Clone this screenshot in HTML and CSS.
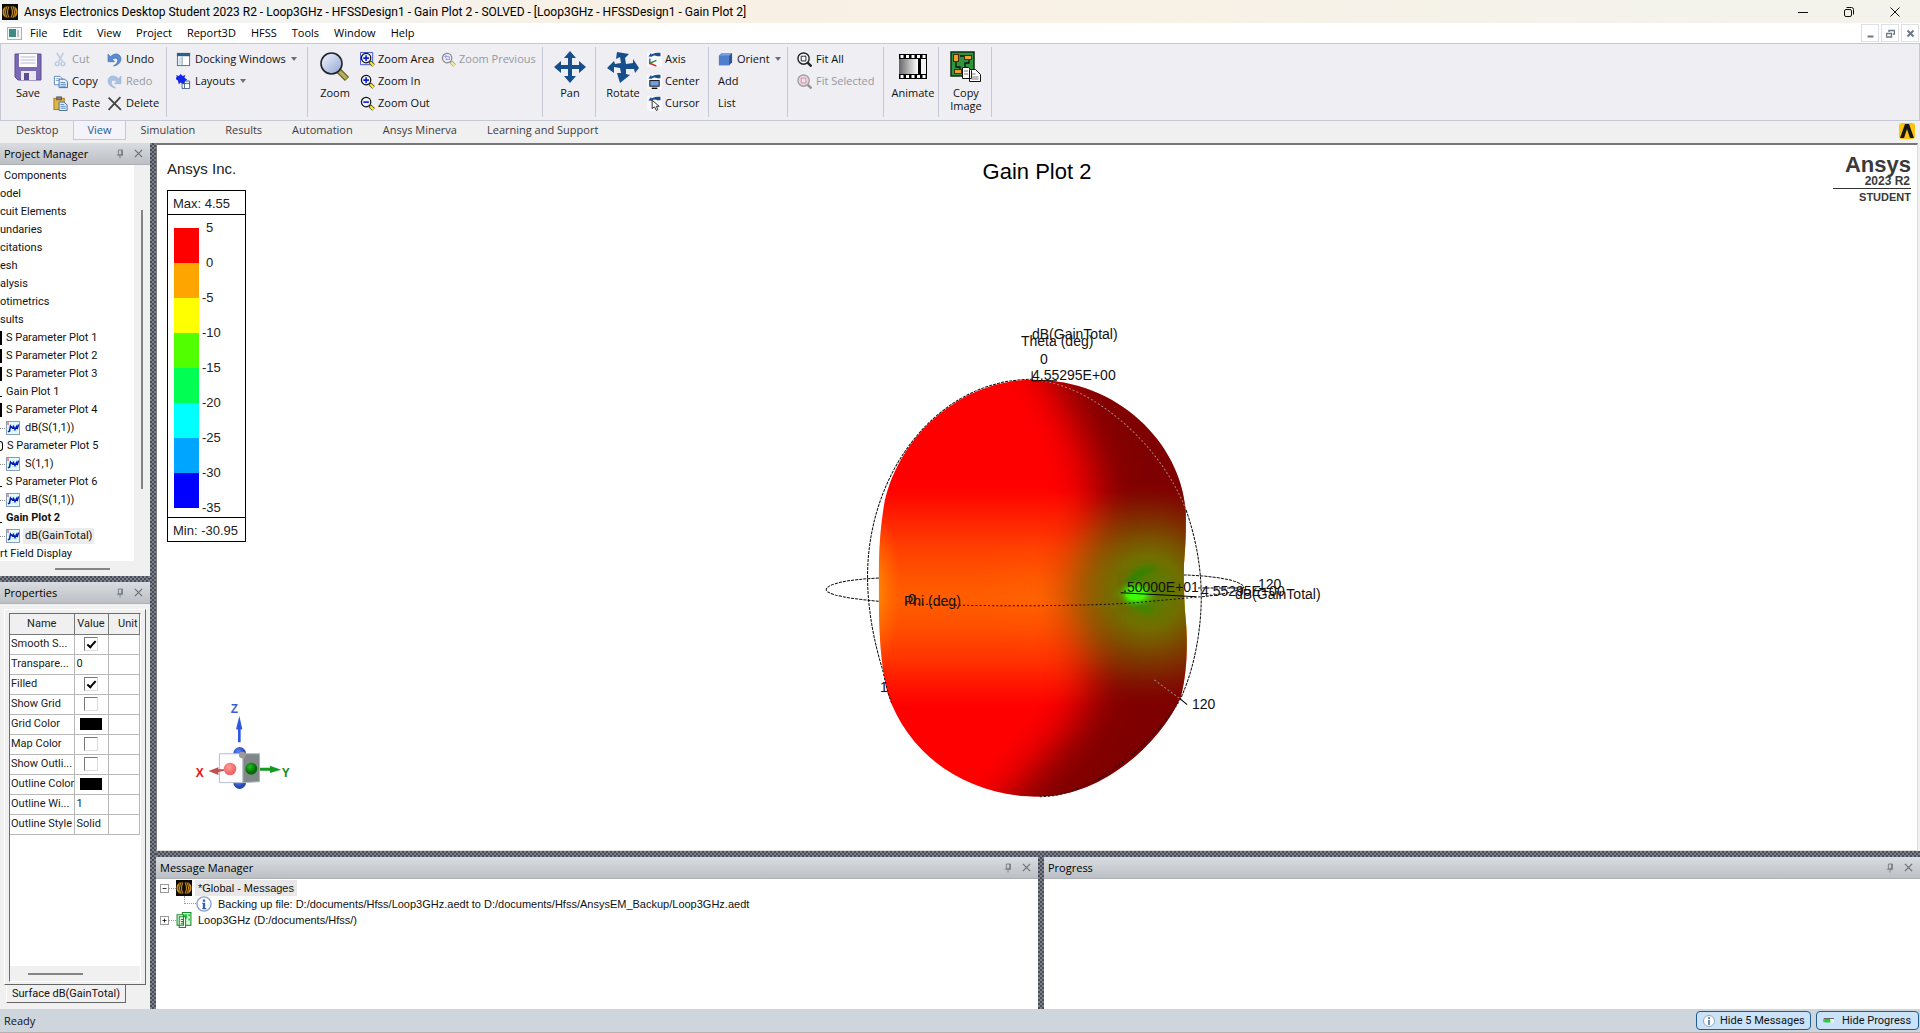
FILE: index.html
```html
<!DOCTYPE html>
<html lang="en">
<head>
<meta charset="utf-8">
<title>Ansys Electronics Desktop Student 2023 R2</title>
<link rel="stylesheet" href="styles.css">
</head>
<body>
<svg class="sprite" aria-hidden="true">
  <defs>
    <linearGradient id="glass" x1="0" y1="0" x2="1" y2="1"><stop offset="0" stop-color="#f4f8ff"/><stop offset="1" stop-color="#8fa3d0"/></linearGradient>
    <linearGradient id="film" x1="0" y1="0" x2="1" y2="0"><stop offset="0" stop-color="#666"/><stop offset="1" stop-color="#fff"/></linearGradient>
    <symbol id="i-ansys" viewBox="0 0 16 16"><rect width="16" height="16" fill="#0d0a06"/><g fill="none" stroke="#c98d1e" stroke-width="1.1"><path d="M7 2.500q-3 5.500 0 11M5.200 2.200q-3.400 5.800 0 11.600M3.400 2.800q-3.200 5.200 0 10.400M1.800 4.500q-1.400 3.500 0 7"/><path d="M9 2.500q3 5.500 0 11M10.800 2.200q3.400 5.800 0 11.600M12.600 2.800q3.200 5.200 0 10.400M14.200 4.500q1.400 3.500 0 7"/></g></symbol>
    <symbol id="i-pin" viewBox="0 0 10 12"><path d="M3 1h5v6H3zM1 7.500h8M5 8v3.500M7 1v6" fill="none" stroke="#6a6f78"/></symbol>
    <symbol id="i-x" viewBox="0 0 10 10"><path d="M1 1l8 8M9 1l-8 8" fill="none" stroke="#6a6f78" stroke-width="1.300"/></symbol>
    <symbol id="i-trace" viewBox="0 0 14 14"><rect x=".5" y=".5" width="13" height="13" fill="#e3fbfb" stroke="#8a9cb8"/><path d="M2 4h10M2 7h10M2 10h10" stroke="#9ce4e8" stroke-dasharray="1 1"/><path d="M2 11l1.500-1L4.500 5l2 2 1-1.500 1.500 3 1.500-3 1 1.500L12.500 3.500" fill="none" stroke="#0a14b8" stroke-width="1.500"/><path d="M2 1v3" stroke="#e04040"/></symbol>
    <symbol id="i-arc" viewBox="0 0 16 7"><path d="M1 5.500L4.500.8v2.400C7.500 1 11 1 16 .8v4.400h-4C9 3.600 6.500 4.500 5 6z" fill="#1a4f8c"/></symbol>
    <symbol id="i-undo" viewBox="0 0 14 14"><path d="M1 2v7h6L5 7c2-2 5-1.500 5 1 0 2-1.500 3.500-4 5 4-.5 7-3 7-6.500C13 1.500 7 0 3.300 4.500z" fill="#5b8cd0" stroke="#3a68ac" stroke-width=".6"/></symbol>
    <symbol id="i-handle" viewBox="0 0 16 16"><path d="M10.500 10.500l4 4" stroke="#333" stroke-width="3.800"/><path d="M11 11l3.500 3.500" stroke="#ffee20" stroke-width="2.400"/><circle cx="6.500" cy="6.500" r="5" fill="#eef2ff" stroke="#111" stroke-width="1.300"/></symbol>
    <symbol id="i-info" viewBox="0 0 14 14"><circle cx="7" cy="7" r="6.200" fill="#fff" stroke="#8aa0cc" stroke-width="1.200"/><path d="M6 3h2v2H6zM5.500 6H8v4.500h1v1H5.500v-1H6V7h-.5z" fill="#2f62b8"/></symbol>
  </defs>
</svg>

<header class="titlebar">
  <svg class="app-icon"><use href="#i-ansys"/></svg>
  <h1>Ansys Electronics Desktop Student 2023 R2 - Loop3GHz - HFSSDesign1 - Gain Plot 2 - SOLVED - [Loop3GHz - HFSSDesign1 - Gain Plot 2]</h1>
  <div class="window-buttons">
    <button aria-label="Minimize"><svg viewBox="0 0 10 10"><path d="M0 5.500h10"/></svg></button>
    <button aria-label="Restore"><svg viewBox="0 0 10 10"><rect x=".5" y="2.500" width="7" height="7" rx="1.500"/><path d="M2.500.5h5q2 0 2 2v5"/></svg></button>
    <button aria-label="Close"><svg viewBox="0 0 10 10"><path d="M.5.5l9 9M9.500.5l-9 9"/></svg></button>
  </div>
</header>

<nav class="menubar">
  <svg class="doc-icon" viewBox="0 0 15 13"><rect x=".5" y=".5" width="14" height="12" fill="#f4f6f8" stroke="#aab2ba"/><rect x="2" y="2" width="7" height="8" fill="#3d8b84"/><path d="M11 3v7" stroke="#b8c0c8" stroke-width="2"/></svg>
  <button>File</button><button>Edit</button><button>View</button><button>Project</button><button>Report3D</button><button>HFSS</button><button>Tools</button><button>Window</button><button>Help</button>
  <div class="mdi-buttons">
    <button aria-label="Minimize document"><svg viewBox="0 0 9 9"><path d="M1.500 7.500h6" stroke-width="2"/></svg></button>
    <button aria-label="Restore document"><svg viewBox="0 0 9 9"><path d="M3 3V1.500h5.500V5H7M.5 4.500h5v3.500h-5z" stroke-width="1.400"/></svg></button>
    <button aria-label="Close document"><svg viewBox="0 0 9 9"><path d="M1.500 1.500l6 6M7.500 1.500l-6 6" stroke-width="2"/></svg></button>
  </div>
</nav>

<section class="ribbon" aria-label="View ribbon">
  <div class="group g-edit">
    <button class="big"><svg viewBox="0 0 32 32"><path d="M3 3h26v26H6l-3-3z" fill="#7b69b4" stroke="#5d4c94"/><rect x="7" y="3" width="18" height="13" fill="#fdfdff"/><path d="M8.500 6h15M8.500 9h15M8.500 12h15" stroke="#b7b9cc"/><rect x="9" y="20" width="15" height="9" fill="#e9e8f2"/><rect x="12" y="22" width="5" height="7" fill="#5d4c94"/></svg>Save</button>
    <div class="stack c-cut">
      <button disabled><svg viewBox="0 0 16 16"><path d="M4 1l6 9M11 1L6 10" stroke="#8fa3c4" stroke-width="1.800"/><circle cx="4.500" cy="12.500" r="2" fill="none" stroke="#7f9cd0" stroke-width="1.500"/><circle cx="10.500" cy="12.500" r="2" fill="none" stroke="#7f9cd0" stroke-width="1.500"/></svg>Cut</button>
      <button><svg viewBox="0 0 16 16"><path d="M1.500 2.500h6l2 2v7h-8z" fill="#fff" stroke="#5a84b8"/><path d="M3 5h4M3 7h5" stroke="#7ba2d4"/><path d="M6.500 5.500h6l3 3v6h-9z" fill="#eaf2fc" stroke="#3c6ca8"/><path d="M8 9h5M8 11h6M8 13h6" stroke="#4f83c4"/></svg>Copy</button>
      <button><svg viewBox="0 0 16 16"><rect x="1" y="2.500" width="11" height="12" fill="#e3b53c" stroke="#a07820"/><rect x="4" y="1" width="5" height="3" fill="#888" stroke="#555"/><path d="M6.500 6.500h5l3.500 3v6H6.500z" fill="#eef4fd" stroke="#3f669c"/><path d="M8 9h4M8 11h5.500M8 13h5.500" stroke="#4f83c4"/></svg>Paste</button>
    </div>
    <div class="stack">
      <button><svg viewBox="0 0 14 14"><use href="#i-undo"/></svg>Undo</button>
      <button disabled><svg class="flip" viewBox="0 0 14 14"><use href="#i-undo"/></svg>Redo</button>
      <button><svg viewBox="0 0 14 14"><path d="M1.500 1.500L13 13M12.500 1L1.500 13" stroke="#444" stroke-width="1.700"/></svg>Delete</button>
    </div>
  </div>
  <div class="group g-dock">
    <div class="stack">
      <button><svg viewBox="0 0 16 16"><rect x="1.500" y="1.500" width="13" height="13" fill="#fff" stroke="#4a7090"/><rect x="1" y="1" width="14" height="3.500" fill="#2e5f86"/><rect x="2.500" y="6" width="3" height="7.500" fill="#d2e2ee"/><path d="M6.500 5v9" stroke="#6e90a8"/></svg>Docking Windows<i class="caret"></i></button>
      <button><svg viewBox="0 0 16 16"><path d="M6.500 7.500h8v8h-8z" fill="#fff" stroke="#3d6482"/><path d="M9 7v8M7 10h8" stroke="#3d6482"/><path d="M0 1l3 1 2-2 2 2 3-1-1 3 3 2-3 2-1 3-3-2-2 2-1-4-3-2 2-2z" fill="#1426e8"/></svg>Layouts<i class="caret"></i></button>
    </div>
  </div>
  <div class="group g-zoom">
    <button class="big"><svg viewBox="0 0 32 32"><path d="M20 20l8 8" stroke="#5c5a28" stroke-width="6"/><path d="M20 20l7.500 7.500" stroke="#b7ae5a" stroke-width="3.500"/><circle cx="12.500" cy="12.500" r="10.500" fill="url(#glass)" stroke="#23252c" stroke-width="1.600"/></svg>Zoom</button>
    <div class="stack c-area">
      <button><svg viewBox="0 0 16 16"><path d="M.5.5h13v13H.5z" fill="none" stroke="#4050d0"/><use href="#i-handle"/><path d="M6.500 3.500v6M3.500 6.500h6" stroke="#0a1cd0" stroke-width="1.700"/></svg>Zoom Area</button>
      <button><svg viewBox="0 0 16 16"><use href="#i-handle"/><path d="M6.500 3.500v6M3.500 6.500h6" stroke="#0a1cd0" stroke-width="1.700"/></svg>Zoom In</button>
      <button><svg viewBox="0 0 16 16"><use href="#i-handle"/><path d="M3.500 6.500h6" stroke="#0a1cd0" stroke-width="1.700"/></svg>Zoom Out</button>
    </div>
    <div class="stack">
      <button disabled><svg viewBox="0 0 16 16"><use href="#i-handle"/><path d="M4 5h5v3H5M6 3L4 5l2 2" fill="none" stroke="#1c2ce0"/></svg>Zoom Previous</button>
    </div>
  </div>
  <div class="group g-pan">
    <button class="big"><svg viewBox="0 0 32 32"><path d="M16 0l6 7h-4v7h7v-4l7 6-7 6v-4h-7v7h4l-6 7-6-7h4v-7H7v4l-7-6 7-6v4h7V7h-4z" fill="#164e8c"/></svg>Pan</button>
  </div>
  <div class="group g-rotate">
    <button class="big"><svg viewBox="0 0 32 32"><path d="M10 1l12 2-4 4 1 6 7-1V8l6 9-4 5-1-4-8 0 0 5 4 1-10 8-3-10h4l-1-5-6-1v6L0 17l7-7 1 3 6-1-1-6-4 2z" fill="#164e8c"/></svg>Rotate</button>
    <div class="stack">
      <button><svg viewBox="0 0 16 16"><rect width="16" height="16" fill="#f8f8fc"/><use href="#i-arc" width="15" height="6"/><path d="M3 7v6" stroke="#2a50e0" stroke-width="1.500"/><path d="M3 12l7-3" stroke="#1c9a30" stroke-width="1.500"/><path d="M3 12l7 3" stroke="#e02020" stroke-width="1.500"/></svg>Axis</button>
      <button><svg viewBox="0 0 16 16"><rect width="16" height="16" fill="#f8f8fc"/><use href="#i-arc" width="15" height="6"/><rect x="3" y="7" width="10" height="6" fill="#6f9fe0" stroke="#111"/><path d="M5 15.500h6" stroke="#111" stroke-width="2"/></svg>Center</button>
      <button><svg viewBox="0 0 16 16"><rect width="16" height="16" fill="#f8f8fc"/><use href="#i-arc" width="15" height="6"/><path d="M5.500 4.500v9l2.500-2 2 4 1.500-1-1.500-3.500h3z" fill="#fff" stroke="#222"/></svg>Cursor</button>
    </div>
  </div>
  <div class="group g-orient">
    <div class="stack">
      <button><svg viewBox="0 0 16 16"><path d="M1 4l3-3h11v10l-3 3H1z" fill="#2f5296"/><path d="M1 4h11v10H1z" fill="#4f7fcc"/><path d="M1 4l3-3h11l-3 3z" fill="#7aa0e0"/></svg>Orient<i class="caret"></i></button>
      <button>Add</button>
      <button>List</button>
    </div>
  </div>
  <div class="group g-fit">
    <div class="stack">
      <button><svg viewBox="0 0 16 16"><path d="M11 11l4.500 4.500" stroke="#222" stroke-width="2.500"/><circle cx="7" cy="7" r="6" fill="#f2f4ff" stroke="#222" stroke-width="1.500"/><path d="M4.500 4.500h5v5h-5z" fill="#fff" stroke="#222"/></svg>Fit All</button>
      <button disabled><svg viewBox="0 0 16 16"><path d="M11 11l4.500 4.500" stroke="#222" stroke-width="2.500"/><circle cx="7" cy="7" r="6" fill="#e8b8c4" stroke="#444" stroke-width="1.500"/><path d="M4.500 4.500h5v5h-5z" fill="#f8d8e0" stroke="#a02040"/></svg>Fit Selected</button>
    </div>
  </div>
  <div class="group g-animate">
    <button class="big"><svg viewBox="0 0 32 32"><rect x="2" y="3" width="28" height="25"/><path d="M3.500 5.500h25M3.500 25.500h25" stroke="#fff" stroke-width="3" stroke-dasharray="3 2.500"/><rect x="2" y="8" width="19" height="15" fill="url(#film)"/><rect x="24" y="8" width="5" height="15" fill="#f4f4f4"/></svg>Animate</button>
  </div>
  <div class="group g-copy">
    <button class="big"><svg viewBox="0 0 32 32"><rect x="1" y="1" width="23" height="24" fill="#2f9440" stroke="#0d2c12" stroke-width="1.500"/><path d="M6 10v6h4v4M19 8v4h-4v6M10 5h5" fill="none" stroke="#111" stroke-width="1.300"/><g fill="#f0a030" stroke="#4a2a08"><rect x="3.500" y="3.500" width="5" height="7"/><rect x="14.500" y="4.500" width="7" height="4"/><rect x="4.500" y="18.500" width="7" height="4"/></g><path d="M12.500 16.500h6l3 3v8h-9zM19.500 18.500h6l5 5v7h-11z" fill="#fff" stroke="#111"/><path d="M14 20h4M14 23h4M21.500 23h4M21.500 26h7M21.500 28h7" stroke="#777"/></svg>Copy<br>Image</button>
  </div>
</section>

<nav class="tabs">
  <a href="#">Desktop</a><a href="#" class="active">View</a><a href="#">Simulation</a><a href="#">Results</a><a href="#">Automation</a><a href="#">Ansys Minerva</a><a href="#">Learning and Support</a>
  <svg class="brand" viewBox="0 0 16 16"><rect width="16" height="16" rx="3" fill="#ffc20e"/><path d="M1 15L6 1h4l5 14h-4L8 6l-3 9z" fill="#161616"/></svg>
</nav>

<main class="workspace">
  <aside class="left-dock">
    <section class="panel project">
      <header class="caption"><h2>Project Manager</h2><button aria-label="Pin"><svg class="pin"><use href="#i-pin"/></svg></button><button aria-label="Close"><svg class="x"><use href="#i-x"/></svg></button></header>
      <div class="tree-frame">
        <ul class="tree">
          <li class="pad">Components</li><li>odel</li><li>cuit Elements</li><li>undaries</li><li>citations</li><li>esh</li><li>alysis</li><li>otimetrics</li><li>sults</li>
          <li class="plot bar">S Parameter Plot 1</li><li class="plot bar">S Parameter Plot 2</li><li class="plot bar">S Parameter Plot 3</li><li class="plot dash">Gain Plot 1</li><li class="plot bar">S Parameter Plot 4</li>
          <li class="leaf"><svg><use href="#i-trace"/></svg><span>dB(S(1,1))</span></li>
          <li class="plot ring">S Parameter Plot 5</li>
          <li class="leaf"><svg><use href="#i-trace"/></svg><span>S(1,1)</span></li>
          <li class="plot dash">S Parameter Plot 6</li>
          <li class="leaf"><svg><use href="#i-trace"/></svg><span>dB(S(1,1))</span></li>
          <li class="plot dash current">Gain Plot 2</li>
          <li class="leaf selected"><svg><use href="#i-trace"/></svg><span>dB(GainTotal)</span></li>
          <li>rt Field Display</li>
        </ul>
        <div class="vscroll"><i></i></div>
      </div>
      <div class="hscroll"><i></i></div>
    </section>
    <div class="splitter row"></div>
    <section class="panel properties">
      <header class="caption"><h2>Properties</h2><button aria-label="Pin"><svg class="pin"><use href="#i-pin"/></svg></button><button aria-label="Close"><svg class="x"><use href="#i-x"/></svg></button></header>
      <div class="sheet">
        <div class="grid-frame">
          <table>
            <colgroup><col class="c-name"><col class="c-value"><col></colgroup>
            <thead><tr><th>Name</th><th>Value</th><th class="unit">Unit</th></tr></thead>
            <tbody>
              <tr><td>Smooth S...</td><td class="mid"><input type="checkbox" aria-label="Smooth Shading" checked></td><td></td></tr>
              <tr><td>Transpare...</td><td>0</td><td></td></tr>
              <tr><td>Filled</td><td class="mid"><input type="checkbox" aria-label="Filled" checked></td><td></td></tr>
              <tr><td>Show Grid</td><td class="mid"><input type="checkbox" aria-label="Show Grid"></td><td></td></tr>
              <tr><td>Grid Color</td><td class="mid"><button class="swatch" aria-label="Grid Color"></button></td><td></td></tr>
              <tr><td>Map Color</td><td class="mid"><input type="checkbox" aria-label="Map Color"></td><td></td></tr>
              <tr><td>Show Outli...</td><td class="mid"><input type="checkbox" aria-label="Show Outline"></td><td></td></tr>
              <tr><td>Outline Color</td><td class="mid"><button class="swatch" aria-label="Outline Color"></button></td><td></td></tr>
              <tr><td>Outline Wi...</td><td>1</td><td></td></tr>
              <tr><td>Outline Style</td><td>Solid</td><td></td></tr>
            </tbody>
          </table>
          <div class="hscroll"><i></i></div>
        </div>
      </div>
      <button class="sheet-tab">Surface dB(GainTotal)</button>
    </section>
  </aside>
  <div class="splitter col"></div>

  <div class="center">
    <section class="view">
      <div class="view-left">
        <p class="company">Ansys Inc.</p>
        <div class="legend">
          <div class="limit">Max: 4.55</div>
          <div class="scale">
            <div class="ramp"><i class="k1"></i><i class="k2"></i><i class="k3"></i><i class="k4"></i><i class="k5"></i><i class="k6"></i><i class="k7"></i><i class="k8"></i></div>
            <ol><li class="pos">5</li><li class="pos">0</li><li>-5</li><li>-10</li><li>-15</li><li>-20</li><li>-25</li><li>-30</li><li>-35</li></ol>
          </div>
          <div class="limit">Min: -30.95</div>
        </div>
        <svg class="triad" viewBox="0 0 300 250">
          <defs>
            <radialGradient id="ballR" cx=".4" cy=".35"><stop offset="0" stop-color="#ff9d9d"/><stop offset="1" stop-color="#f06868"/></radialGradient>
            <radialGradient id="ballG" cx=".4" cy=".35"><stop offset="0" stop-color="#22c022"/><stop offset="1" stop-color="#066806"/></radialGradient>
            <radialGradient id="ballB" cx=".4" cy=".35"><stop offset="0" stop-color="#5b86ff"/><stop offset="1" stop-color="#2448b0"/></radialGradient>
          </defs>
          <g transform="translate(-90 -40)">
            <circle cx="239" cy="219" r="19" fill="url(#ballB)"/><circle cx="239" cy="307" r="19" fill="url(#ballB)"/>
            <path d="M178 220h71v87h-71z" fill="#fdfdff" stroke="#b4c0d2" stroke-width="3"/><path d="M249 220h50v84l-50 3z" fill="#808888" stroke="#aab4c0" stroke-width="3"/>
            <circle cx="247" cy="224" r="10" fill="#a09a9a"/>
            <path d="M234 185v-38l-6-1 10-40 9 40-5 1v38z" fill="#2f58e0"/>
            <path d="M300 262h30v-6l34 12-34 10v-7h-30z" fill="#149a20"/><circle cx="274" cy="265" r="18" fill="url(#ballG)"/>
            <path d="M193 267h-18v-6l-30 11 30 12v-9l18-4z" fill="#c05050"/><circle cx="210" cy="266" r="19" fill="url(#ballR)"/>
            <text x="212" y="98" fill="#3b5fd0">Z</text><text x="107" y="291" fill="#f01010">X</text><text x="366" y="289" fill="#0f8c1c">Y</text>
          </g>
        </svg>
      </div>
      <div class="view-mid">
        <h2>Gain Plot 2</h2>
        <svg class="plot3d" viewBox="-84 0 624 510">
          <defs>
            <linearGradient id="body" gradientUnits="userSpaceOnUse" x1="0" y1="500" x2="0" y2="1220">
              <stop offset="0" stop-color="#f00"/><stop offset=".06" stop-color="#ff0300"/><stop offset=".17" stop-color="#ff2000"/><stop offset=".3" stop-color="#ff4000"/><stop offset=".42" stop-color="#ff5400"/><stop offset=".51" stop-color="#ff5e00"/><stop offset=".62" stop-color="#ff5000"/><stop offset=".76" stop-color="#ff3400"/><stop offset=".87" stop-color="#ff1400"/><stop offset=".96" stop-color="#f00"/>
            </linearGradient>
            <radialGradient id="edge"><stop offset="0" stop-color="#ff9000" stop-opacity=".9"/><stop offset="1" stop-color="#ff7000" stop-opacity="0"/></radialGradient>
            <radialGradient id="null">
              <stop offset="0" stop-color="#a8ff00"/><stop offset=".18" stop-color="#c4f400"/><stop offset=".34" stop-color="#e4dc00"/><stop offset=".5" stop-color="#f0b800" stop-opacity=".85"/><stop offset=".7" stop-color="#f89000" stop-opacity=".5"/><stop offset=".86" stop-color="#ff7800" stop-opacity=".18"/><stop offset="1" stop-color="#ff5000" stop-opacity="0"/>
            </radialGradient>
            <radialGradient id="glow"><stop offset="0" stop-color="#3f1"/><stop offset=".4" stop-color="#44f800"/><stop offset="1" stop-color="#50a000" stop-opacity="0"/></radialGradient>
            <filter id="soft" filterUnits="userSpaceOnUse" x="0" y="0" width="1900" height="1800"><feGaussianBlur stdDeviation="60"/></filter>
            <filter id="soft2" x="-1" y="-1" width="3" height="3"><feGaussianBlur stdDeviation="9"/></filter>
            <clipPath id="hull"><path d="M650 209C440 209 255 380 217 590C202 690 203 760 203 850C203 1000 212 1080 228 1150C290 1340 460 1460 670 1460C850 1460 1020 1300 1080 1160C1098 1090 1100 1000 1094 930C1088 860 1088 800 1089 760C1094 700 1095 660 1094 600C1078 400 900 209 650 209Z"/></clipPath>
          </defs>
          <g class="wire" transform="scale(.34439 .33333)">
            <path d="M203 804C120 808 50 820 50 840C60 862 170 872 280 880"/>
            <path d="M1088 795C1160 796 1262 810 1262 833C1240 845 1190 856 1130 861"/>
            <path d="M650 208C380 205 170 480 170 800C170 900 190 1000 214 1080"/>
            <path d="M1095 600C1125 690 1140 780 1139 870C1137 990 1110 1100 1076 1172"/>
            <path d="M1130 834H1262"/>
          </g>
          <text x="71" y="382">1.</text>
          <g transform="scale(.34439 .33333)">
            <g clip-path="url(#hull)">
              <path d="M190 190h920v1290H190z" fill="url(#body)"/>
              <ellipse cx="195" cy="840" rx="70" ry="240" fill="url(#edge)"/>
              <ellipse cx="680" cy="850" rx="200" ry="180" fill="url(#edge)" opacity=".15"/>
              <ellipse cx="985" cy="845" rx="300" ry="320" fill="url(#null)"/>
              <path class="shade" d="M580 0C720 220 815 380 835 540C840 660 780 740 765 850C780 980 845 1060 810 1170S620 1400 500 1560V1750H1850V0Z" filter="url(#soft)"/>
              <path d="M912 835C930 780 975 765 1015 770C990 790 960 800 935 835Z" fill="#2f8400" filter="url(#soft2)"/>
              <path d="M915 860C930 890 960 905 1010 905C980 880 960 880 940 860Z" fill="#308800" filter="url(#soft2)"/>
              <ellipse cx="948" cy="852" rx="66" ry="42" fill="url(#glow)"/>
              <path d="M895 780h27q-24 70 4 130h-31z" fill="#726800" filter="url(#soft2)" opacity=".8"/>
            </g>
            <g class="wire dotted">
              <path d="M280 880C450 890 800 890 950 878L1130 861M214 1080C222 1120 230 1150 240 1180"/>
              <path d="M670 1460C800 1462 980 1330 1076 1172"/>
            </g>
            <path class="wire pale" d="M650 210C820 220 1020 400 1095 600M1003 1110L1076 1165"/>
            <path class="axis" d="M905 848L1125 860M648 184V212H720M1076 1165L1098 1184"/>
          </g>
          <g>
            <text x="223" y="29">dB(GainTotal)</text><text x="212" y="36">Theta (deg)</text><text x="231" y="54">0</text><text x="223" y="70">4.55295E+00</text>
            <text x="449" y="279">120</text><text x="392" y="286">4.55295E+00</text><text x="426" y="289">dB(GainTotal)</text><text x="314" y="282">.50000E+01</text>
            <text x="95" y="296">Phi (deg)</text><text x="99" y="294">0</text><text x="383" y="399">120</text>
          </g>
        </svg>
      </div>
      <div class="view-right">
        <div class="logo"><b>Ansys</b><span>2023 R2</span><strong>STUDENT</strong></div>
      </div>
    </section>
    <div class="splitter row"></div>
    <div class="bottom-dock">
      <section class="panel messages">
        <header class="caption"><h2>Message Manager</h2><button aria-label="Pin"><svg class="pin"><use href="#i-pin"/></svg></button><button aria-label="Close"><svg class="x"><use href="#i-x"/></svg></button></header>
        <ul class="log">
          <li><button class="fold" aria-label="Collapse"><svg viewBox="0 0 9 9"><path d="M2 4.500h5"/></svg></button><i class="link"></i><svg class="ic"><use href="#i-ansys"/></svg><span class="hit">*Global - Messages</span></li>
          <li class="child"><i class="elbow"></i><svg class="ic"><use href="#i-info"/></svg><span>Backing up file: D:/documents/Hfss/Loop3GHz.aedt to D:/documents/Hfss/AnsysEM_Backup/Loop3GHz.aedt</span></li>
          <li><button class="fold" aria-label="Expand"><svg viewBox="0 0 9 9"><path d="M2 4.500h5M4.500 2v5"/></svg></button><i class="link"></i><svg class="ic" viewBox="0 0 14 15"><rect x="5.500" y=".5" width="8" height="12" fill="#d9ffd9" stroke="#1c8a2c"/><path d="M7 3h3M7 5h3M11 3h2M11 7h2" stroke="#20d040" stroke-width="2"/><path d="M.5 2.500h6v10h-6zM2.500 4.500h6v10h-6z" fill="#f2fff2" stroke="#1c8a2c"/><path d="M4 7h3M4 9h3M4 11h3" stroke="#1c8a2c"/></svg><span>Loop3GHz (D:/documents/Hfss/)</span></li>
        </ul>
      </section>
      <div class="splitter col"></div>
      <section class="panel progress">
        <header class="caption"><h2>Progress</h2><button aria-label="Pin"><svg class="pin"><use href="#i-pin"/></svg></button><button aria-label="Close"><svg class="x"><use href="#i-x"/></svg></button></header>
      </section>
    </div>
  </div>
</main>

<footer class="status">
  <span>Ready</span>
  <button><svg class="ic" viewBox="0 0 14 14"><circle cx="7" cy="7" r="5.500" fill="#fff" stroke="#9aa4b4"/><path d="M7 3v2M7 6v5" stroke="#3c66b4" stroke-width="1.500"/></svg>Hide 5 Messages</button>
  <button class="wide"><svg class="ic" viewBox="0 0 14 14"><path d="M2 8V4.500h10" fill="none" stroke="#666"/><path d="M2.500 5h6v3.500h-6z" fill="#1fd02f"/><path d="M8.500 5H12v3.500H8.500z" fill="#f2f2f2"/></svg>Hide Progress</button>
</footer>
</body>
</html>
```
FILE: styles.css
```css
* { box-sizing: border-box; }
html, body { height: 100%; }
body {
  margin: 0;
  display: flex;
  flex-direction: column;
  min-height: 100vh;
  overflow: hidden;
  background: #f0f0f0;
  color: #111;
  font-family: "Open Sans", sans-serif;
  font-size: 11px;
  line-height: 14px;
}
h1, h2, p, ul, ol { margin: 0; padding: 0; font-weight: 400; }
ul, ol { list-style: none; }
button { padding: 0; border: 0; background: none; color: inherit; font: inherit; white-space: nowrap; }
svg { flex: none; display: block; }
.sprite { position: absolute; width: 0; height: 0; }

/* Title bar and menu */
.titlebar {
  flex: none;
  display: flex;
  align-items: center;
  height: 23px;
  padding-left: 2px;
  background: linear-gradient(90deg, #f1f4f4 0%, #f3f3f0 15%, #f8f0e4 32%, #f8f1e6 60%, #f3f3ec 90%);
}
.app-icon { width: 16px; height: 16px; margin-right: 6px; }
.titlebar h1 { flex: 1; color: #000; font-family: Roboto, sans-serif; font-size: 12px; }
.window-buttons { display: flex; padding-right: 2px; }
.window-buttons button { display: grid; place-items: center; width: 46px; height: 20px; }
.window-buttons svg { width: 10px; height: 10px; fill: none; stroke: #111; }
.menubar { flex: none; display: flex; align-items: center; height: 20px; padding-left: 7px; background: #fff; color: #000; }
.menubar > button { margin-right: 15px; }
.doc-icon { width: 15px; height: 13px; margin-right: 8px; }
.mdi-buttons { display: flex; gap: 2px; margin-left: auto; padding-right: 1px; }
.mdi-buttons button { display: grid; place-items: center; width: 18px; height: 18px; border: 1px solid #dde0e6; }
.mdi-buttons svg { width: 9px; height: 9px; fill: none; stroke: #6b7885; }

/* Ribbon */
.ribbon {
  flex: none;
  display: flex;
  height: 78px;
  padding: 3px 0;
  border: 1px solid #c6c8d6;
  background: #eeeef3;
}
.group { display: flex; align-items: flex-start; padding-top: 1px; border-right: 1px solid #c6c8d6; }
.stack button { display: flex; align-items: center; gap: 4px; height: 22px; }
.stack button:disabled { color: #9798a0; }
.stack button:disabled svg { opacity: .45; }
.stack svg { width: 15px; height: 15px; }
.flip { transform: scaleX(-1); }
.caret { margin-left: 1px; border: 3px solid transparent; border-top: 4px solid #6c6e78; border-bottom: 0; }
.big { display: flex; flex-direction: column; align-items: center; width: 42px; line-height: 13px; }
.big svg { width: 32px; height: 32px; margin: 3px 0; }
.g-edit { width: 166px; padding-left: 6px; }
.g-edit .stack { margin-left: 4px; }
.g-edit .c-cut { width: 50px; }
.g-dock { width: 141px; padding-left: 9px; }
.g-zoom { width: 235px; padding-left: 6px; }
.g-zoom .big { margin-right: 4px; }
.c-area { width: 81px; }
.g-zoom .stack button, .g-rotate .stack button { gap: 3px; }
.g-pan { width: 53px; padding-left: 6px; }
.g-rotate { width: 113px; padding-left: 6px; }
.g-rotate .big { margin-right: 3px; }
.g-orient { width: 79px; padding-left: 9px; }
.g-fit { width: 96px; padding-left: 9px; }
.g-animate { width: 55px; padding-left: 8px; }
.g-copy { width: 53px; padding-left: 6px; }

/* Ribbon tabs */
.tabs { flex: none; display: flex; align-items: flex-start; height: 22px; }
.tabs a { height: 19px; padding: 2px 15px 0; color: #3c3c44; text-decoration: none; }
.tabs a:first-child { padding-left: 16px; }
.tabs .active { padding: 2px 13px 0; border: 1px solid #c6c8d6; border-top: 0; background: #f3f3f9; color: #1c5c98; }
.brand { width: 16px; height: 16px; margin: 2px 5px 0 auto; }

/* Docking */
.workspace { flex: 1; display: flex; min-height: 0; }
.left-dock { flex: none; display: flex; flex-direction: column; width: 150px; }
.center { flex: 1; display: flex; flex-direction: column; min-width: 0; }
.panel { display: flex; flex-direction: column; min-height: 0; }
.caption {
  flex: none;
  display: flex;
  align-items: center;
  gap: 10px;
  height: 22px;
  padding: 0 7px 0 4px;
  border-bottom: 1px solid #adb0b4;
  background: linear-gradient(#d9dde2, #bcc0c4);
}
.caption h2 { flex: 1; color: #000; font-size: 11px; line-height: 14px; }
.pin { width: 8px; height: 10px; }
.x { width: 9px; height: 9px; }
.splitter {
  flex: none;
  background: #7e838d conic-gradient(#484c56 25%, #7e838d 0 50%, #484c56 0 75%, #7e838d 0) 0 0 / 4px 4px;
}
.splitter.row { height: 6px; }
.splitter.col { width: 6px; }
.hscroll { flex: none; height: 15px; background: #f0f0f0; }
.hscroll i { display: block; width: 55px; height: 2px; background: #858585; }

/* Project tree */
.project { flex: none; height: 433px; }
.project .hscroll { padding: 7px 0 0 55px; }
.tree-frame { flex: 1; display: flex; min-height: 0; overflow: hidden; }
.tree { flex: 1; padding-top: 2px; background: #fff; font-family: Roboto, sans-serif; }
.tree li { display: flex; align-items: center; height: 18px; white-space: nowrap; }
.tree .pad { padding-left: 4px; }
.tree .plot { gap: 4px; }
.tree .plot::before { content: ""; width: 2px; height: 14px; }
.tree .bar::before { background: #000; }
.tree .dash::before { height: 9px; border-bottom: 1px solid #000; }
.tree .ring::before { height: 8px; border: 1px solid #000; border-left: 0; border-radius: 0 4px 4px 0; }
.tree .current { font-weight: 700; }
.tree .leaf::before { content: ""; width: 5px; margin-right: 1px; border-top: 1px dotted #888; }
.leaf svg { width: 14px; height: 14px; margin-right: 3px; }
.leaf span { padding: 1px 2px; }
.selected span { background: #ececec; }
.vscroll { width: 16px; padding: 45px 0 0 7px; }
.vscroll i { display: block; width: 2px; height: 279px; background: #858585; }

/* Properties */
.properties { flex: 1; align-items: flex-start; font-family: Roboto, sans-serif; }
.properties .caption { width: 100%; font-family: "Open Sans", sans-serif; }
.sheet { flex: 1; align-self: stretch; display: flex; min-height: 0; margin: 5px 4px 0; padding: 3px 4px 2px; border: 1px solid #fff; border-right: 1px solid #666; border-bottom: 1px solid #666; }
.grid-frame { flex: 1; display: flex; flex-direction: column; min-width: 0; overflow: hidden; border: 1px solid #6d6d6d; border-right-color: #fff; border-bottom-color: #fff; background: #fff; }
.grid-frame .hscroll { margin-top: auto; padding: 7px 0 0 18px; }
table { width: 100%; border-collapse: collapse; table-layout: fixed; color: #222; }
.c-name { width: 64px; }
.c-value { width: 34px; }
th, td { height: 20px; padding: 0 0 0 2px; border: 1px solid #b8b8b8; border-width: 0 1px 1px 0; font-weight: 400; text-align: left; vertical-align: middle; white-space: nowrap; }
td:first-child { padding-left: 1px; }
th { padding: 0; background: #f0f0f0; border-color: #777; text-align: center; }
.unit { padding-left: 8px; }
.mid { padding: 0; text-align: center; }
input[type="checkbox"] {
  appearance: none;
  display: block;
  width: 14px;
  height: 14px;
  margin: 0 auto;
  border: 1px solid #777;
  border-right-color: #ddd;
  border-bottom-color: #ddd;
  background: #fff;
}
input:checked::before { content: ""; display: block; width: 7px; height: 3px; margin: 3px 0 0 2px; border: solid #000; border-width: 0 0 2px 2px; transform: rotate(-48deg); }
.swatch { display: block; width: 22px; height: 12px; margin: 0 auto; background: #000; }
.sheet-tab { height: 18px; margin: 0 0 6px 6px; padding: 0 5px; border: 1px solid #666; border-top: 0; border-left-color: #fff; }

/* 3D view */
.view {
  flex: 1;
  display: grid;
  grid-template-columns: 1fr 624px 1fr;
  min-height: 0;
  margin-right: 2px;
  border: 1px solid #777;
  border-top: 2px solid #777;
  border-right-color: #ddd;
  border-bottom-color: #ddd;
  background: #fff;
  color: #222;
  font-family: "Liberation Sans", Arial, sans-serif;
}
.view-left { display: flex; flex-direction: column; padding: 15px 0 73px 10px; }
.company { font-size: 15px; line-height: 18px; }
.legend { width: 79px; margin-top: 12px; border: 1px solid #000; font-size: 13px; }
.limit { height: 23px; padding-left: 5px; line-height: 26px; white-space: nowrap; }
.scale { display: flex; gap: 3px; padding: 13px 0 9px 6px; border: solid #000; border-width: 1px 0; }
.ramp i { display: block; width: 25px; height: 35px; }
.k1 { background: #ff0000; }
.k2 { background: #ffa500; }
.k3 { background: #ffff00; }
.k4 { background: #52ff00; }
.k5 { background: #00ff52; }
.k6 { background: #00ffff; }
.k7 { background: #00a5ff; }
.k8 { background: #0000ff; }
.scale ol { display: flex; flex-direction: column; justify-content: space-between; margin: -7px 0; line-height: 14px; }
.scale .pos { padding-left: 4px; }
.triad { width: 100px; height: 83px; margin: auto 0 0 23px; overflow: visible; }
.triad text { font-size: 36px; font-weight: 700; }
.view-mid h2 { padding-top: 14px; color: #000; font-size: 22px; line-height: 26px; text-align: center; }
.plot3d { width: 624px; height: 510px; margin-top: 125px; }
.plot3d text { font-size: 14px; fill: #111; }
.wire { fill: none; stroke: #111; stroke-width: 3; stroke-dasharray: 9 3; }
.dotted { stroke-dasharray: 6 6; }
.pale { stroke: #a08080; stroke-dasharray: 6 6; }
.axis { fill: none; stroke: #000; stroke-width: 3; }
.shade { fill: #000; opacity: .5; }
.view-right { display: flex; justify-content: flex-end; align-items: flex-start; }
.logo { display: flex; flex-direction: column; align-items: flex-end; width: 78px; margin: 10px 6px 0 0; color: #3a3a3a; font-size: 12px; font-weight: 700; }
.logo b { font-size: 22px; line-height: 20px; }
.logo span { width: 100%; padding-right: 1px; border-bottom: 1px solid #333; line-height: 13px; text-align: right; }
.logo strong { padding-top: 1px; font-size: 11px; }

/* Bottom dock */
.bottom-dock { flex: none; display: flex; height: 152px; }
.messages { width: 882px; }
.progress { flex: 1; }
.bottom-dock .panel { background: #fff; }
.log { padding: 1px 0 0 4px; font-family: "Liberation Sans", Arial, sans-serif; }
.log li { display: flex; align-items: center; height: 16px; white-space: nowrap; }
.log .ic { width: 16px; height: 16px; }
.fold { width: 9px; height: 9px; border: 1px solid #999; background: #fff; }
.fold svg { width: 7px; height: 7px; fill: none; stroke: #000; }
.link { width: 7px; border-top: 1px dotted #999; }
.log span { padding: 1px 3px; }
.log .hit { background: #e8e8e8; }
.log .ic + span { margin-left: 3px; }
.log .child { padding-left: 24px; }
.elbow { width: 12px; height: 8px; margin-bottom: 8px; border: dotted #999; border-width: 0 0 1px 1px; }

/* Status bar */
.status { flex: none; display: flex; align-items: center; gap: 5px; height: 24px; padding: 0 1px 0 4px; border-bottom: 1px solid #b8b0ac; background: #cfd5dd; }
.status span { margin-right: auto; }
.status button { display: flex; align-items: center; gap: 4px; width: 115px; height: 19px; padding-left: 5px; border: 1px solid #1f5c90; border-radius: 4px; background: #cbe3f8; font-family: Roboto, sans-serif; }
.status .wide { gap: 6px; width: 103px; }
.status svg { width: 14px; height: 14px; }
```
